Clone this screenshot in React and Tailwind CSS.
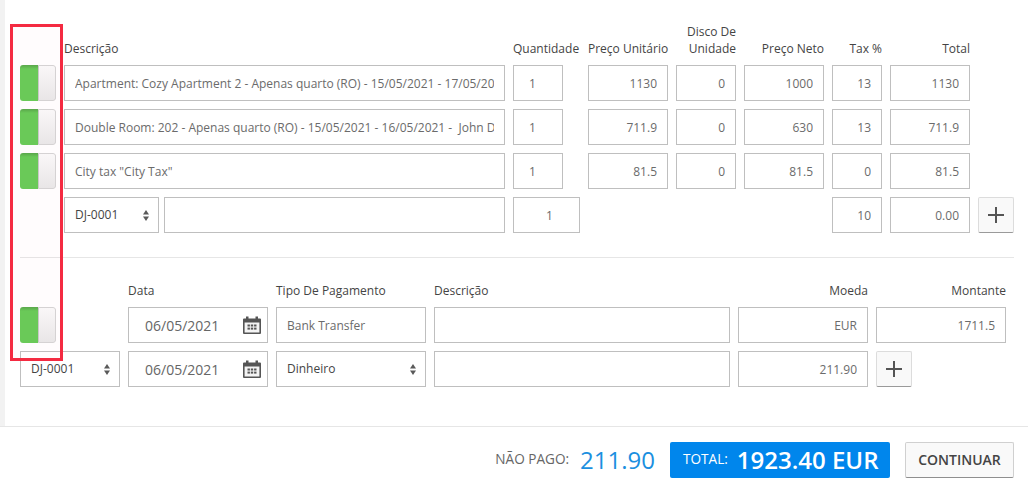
import React from 'react';

const inputClass = 'h-9 w-full min-w-0 border border-[#bfbfbf] bg-white px-[10px] text-xs text-[#6b6b6b] outline-none';

const Toggle = () => (
  <div className="flex h-9 w-9 overflow-hidden rounded-[3px]">
    <div className="w-[18px] bg-[linear-gradient(#58a84b,#68cb58_4px)]"></div>
    <div className="w-[18px] rounded-r-[3px] border border-l-[#c9c9c9] border-[#d4d4d4] bg-gradient-to-b from-[#fafafa] to-[#e9e9e9]"></div>
  </div>
);

const Field = ({ value = '', right, className = '' }) => (
  <input readOnly value={value} className={`${inputClass} ${right ? 'text-right' : ''} ${className}`} />
);

const SortIcon = () => (
  <svg width="6" height="11" viewBox="0 0 6 11" className="shrink-0" fill="#5a5a5a">
    <path d="M3 0 L6 4.5 H0 Z" />
    <path d="M3 11 L0 6.5 H6 Z" />
  </svg>
);

const Select = ({ label, className = '' }) => (
  <div className={`flex h-9 items-center justify-between border border-[#bfbfbf] bg-white pl-[10px] pr-[9px] text-xs text-[#444] ${className}`}>
    <span>{label}</span>
    <SortIcon />
  </div>
);

const CalendarIcon = () => (
  <svg width="18" height="18" viewBox="0 0 18 18" className="shrink-0">
    <path fill="#555" d="M0 3.5 Q0 2.5 1 2.5 H3 V0.5 H5.5 V2.5 H12.5 V0.5 H15 V2.5 H17 Q18 2.5 18 3.5 V17 Q18 18 17 18 H1 Q0 18 0 17 Z" />
    <rect x="1.6" y="6.5" width="14.8" height="10" fill="#f4f4f4" />
    <g fill="#555">
      <rect x="4.5" y="8.5" width="2.4" height="2" />
      <rect x="7.8" y="8.5" width="2.4" height="2" />
      <rect x="11.1" y="8.5" width="2.4" height="2" />
      <rect x="4.5" y="11.6" width="2.4" height="2" />
      <rect x="7.8" y="11.6" width="2.4" height="2" />
      <rect x="11.1" y="11.6" width="2.4" height="2" />
    </g>
  </svg>
);

const DateField = () => (
  <div className="flex h-9 items-center justify-between border border-[#bfbfbf] bg-white pl-4 pr-[6px] text-sm text-[#666]">
    <span className="pt-px">06/05/2021</span>
    <CalendarIcon />
  </div>
);

const PlusButton = () => (
  <button className="flex h-9 w-9 items-center justify-center rounded-[2px] border border-[#dcdcdc] border-b-[#9a9a9a] bg-[#f9f9f9]">
    <svg width="16" height="16" viewBox="0 0 16 16" stroke="#555" strokeWidth="2">
      <path d="M8 0 V16 M0 8 H16" />
    </svg>
  </button>
);

const lines = [
  ['Apartment: Cozy Apartment 2 - Apenas quarto (RO) - 15/05/2021 - 17/05/2021 - John Doe', '1130', '0', '1000', '13', '1130'],
  ['Double Room: 202 - Apenas quarto (RO) - 15/05/2021 - 16/05/2021 -  John Doe', '711.9', '0', '630', '13', '711.9'],
  ['City tax "City Tax"', '81.5', '0', '81.5', '0', '81.5'],
];

const App = () => {
  return (
    <div className="relative flex h-[492px] w-[1028px] flex-col overflow-hidden bg-white font-['Open_Sans',sans-serif] text-xs">
      {/* red highlight drawn over the toggles */}
      <div className="pointer-events-none absolute left-[10px] top-[24px] z-10 h-[337px] w-[53px] border-[3px] border-[#f42a41] bg-[#ff0055]/[0.012]"></div>

      <div className="flex-1 border-l-[5px] border-[#f2f2f2] pl-[15px] pr-[14px] pt-[23px]">
        <div className="grid grid-cols-[36px_441px_67px_80px_60px_80px_50px_80px_36px] gap-x-2 gap-y-2">
          <div></div>
          <div className="self-end leading-[17px] text-[#444]">Descrição</div>
          <div className="self-end leading-[17px] text-[#444]">Quantidade</div>
          <div className="self-end whitespace-nowrap text-right leading-[17px] text-[#444]">Preço Unitário</div>
          <div className="self-end text-right leading-[17px] text-[#444]">Disco De Unidade</div>
          <div className="self-end text-right leading-[17px] text-[#444]">Preço Neto</div>
          <div className="self-end text-right leading-[17px] text-[#444]">Tax %</div>
          <div className="self-end text-right leading-[17px] text-[#444]">Total</div>
          <div></div>

          {lines.map((line) => (
            <React.Fragment key={line[0]}>
              <Toggle />
              <Field value={line[0]} />
              <div className="w-[50px]"><Field value="1" className="pl-[15px]" /></div>
              <Field value={line[1]} right />
              <Field value={line[2]} right />
              <Field value={line[3]} right />
              <Field value={line[4]} right />
              <Field value={line[5]} right />
              <div></div>
            </React.Fragment>
          ))}

          <div></div>
          <div className="flex gap-[5px]">
            <Select label="DJ-0001" className="w-[95px] shrink-0" />
            <Field />
          </div>
          <Field value="1" className="pl-[16px] text-center" />
          <div className="col-span-3"></div>
          <Field value="10" right />
          <Field value="0.00" right />
          <PlusButton />
        </div>

        <div className="mt-6 h-px bg-[#e6e6e6]"></div>

        <div className="mt-6 grid grid-cols-[100px_140px_150px_296px_130px_130px] gap-x-2 gap-y-2">
          <div></div>
          <div className="leading-[17px] text-[#444]">Data</div>
          <div className="leading-[17px] text-[#444]">Tipo De Pagamento</div>
          <div className="leading-[17px] text-[#444]">Descrição</div>
          <div className="text-right leading-[17px] text-[#444]">Moeda</div>
          <div className="text-right leading-[17px] text-[#444]">Montante</div>

          <Toggle />
          <DateField />
          <Field value="Bank Transfer" />
          <Field />
          <Field value="EUR" right />
          <Field value="1711.5" right />

          <Select label="DJ-0001" />
          <DateField />
          <Select label="Dinheiro" />
          <Field />
          <Field value="211.90" right />
          <PlusButton />
        </div>
      </div>

      <div className="flex h-[66px] shrink-0 items-center justify-end border-t border-[#e6e6e6] pr-[14px]">
        <span className="text-[13.6px] text-[#666]">NÃO PAGO:</span>
        <span className="ml-[11px] text-2xl text-[#1b8fe0]">211.90</span>
        <div className="ml-[15px] flex h-9 w-[220px] items-center rounded-[2px] bg-[#0086ec] pl-[13px] text-white">
          <span className="text-[13.6px]">TOTAL:</span>
          <span className="ml-[9px] whitespace-nowrap text-2xl font-[550] leading-none">1923.40 EUR</span>
        </div>
        <button className="ml-[15px] flex h-9 w-[109px] items-center justify-center rounded-[2px] border border-[#d0d0d0] border-b-[#8f8f8f] bg-[#f9f9f9] text-sm font-semibold text-[#444]">
          CONTINUAR
        </button>
      </div>
    </div>
  );
};

export default App;
